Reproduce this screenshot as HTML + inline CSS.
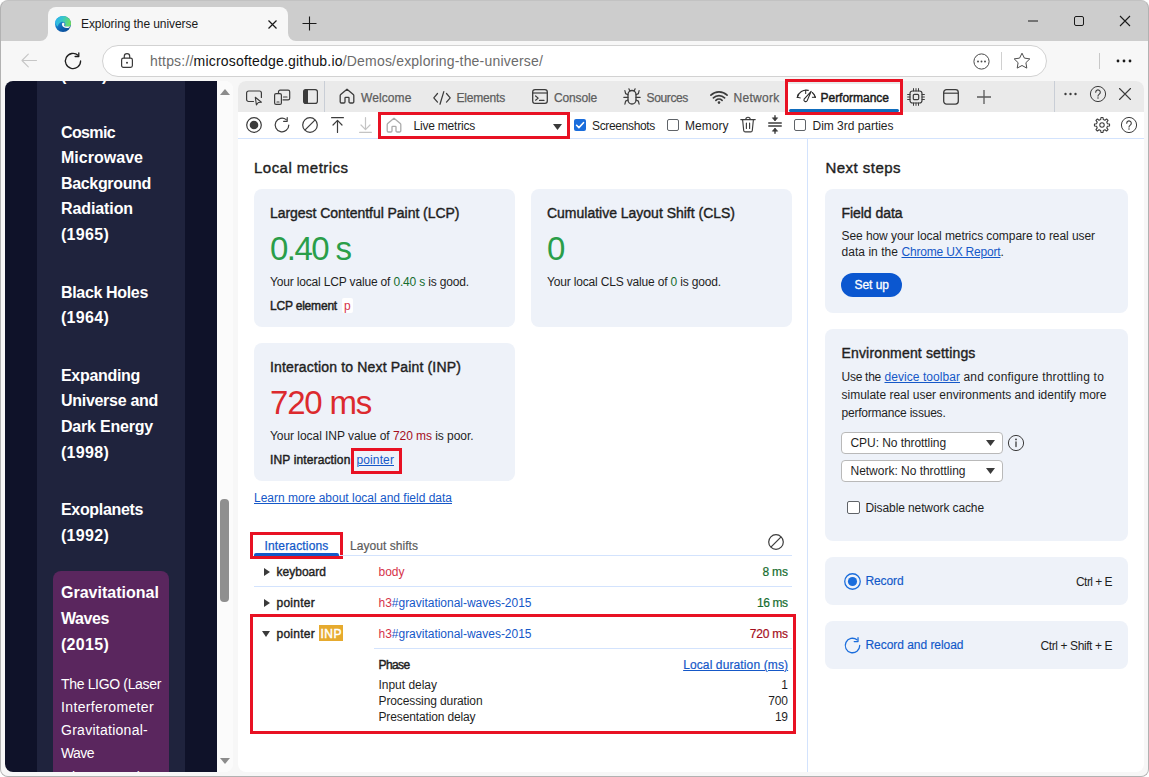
<!DOCTYPE html>
<html lang="en"><head><meta charset="utf-8"><title>Exploring the universe</title>
<style>
*{box-sizing:border-box;margin:0;padding:0}
html,body{width:1149px;height:777px;overflow:hidden;background:#fff}
body{position:relative;font-family:"Liberation Sans",sans-serif;color:#1f1f1f}
.a{position:absolute}
.t{position:absolute;white-space:nowrap;font-family:"Liberation Sans",sans-serif}
svg{position:absolute;overflow:visible}
.card{position:absolute;background:#eef2f9;border-radius:8px}
.red{position:absolute;border:3px solid #e81123}
.cb{position:absolute;width:13px;height:13px;border:1px solid #5f6368;border-radius:2px;background:#fff}
.g{color:#188038}.r{color:#c5221f}.bl{color:#0b57d0}
.u{text-decoration:underline;text-decoration-thickness:1px;text-underline-offset:1px}
</style></head><body>
<div class="a" style="left:0;top:0;width:1149px;height:777px;background:#cdcdcd;border:1px solid #b2b2b2;border-top-color:#c2c2c2;border-radius:8px"></div>
<div class="a" style="left:48px;top:7px;width:240px;height:34px;background:#f7f7f7;border-radius:8px 8px 0 0"></div>
<div class="a" style="left:1px;top:41px;width:1147px;height:40px;background:#f7f7f7"></div>
<div class="a" style="left:102px;top:45px;width:945px;height:32px;background:#fff;border:1px solid #d2d2d2;border-radius:16px"></div>
<div class="a" style="left:1px;top:81px;width:1147px;height:695px;background:#f7f7f7;border-radius:0 0 7px 7px"></div>
<div class="a" id="page" style="left:5px;top:81px;width:228px;height:691px;background:#fbfbfb;border-radius:8px;overflow:hidden"><div class="a" style="left:0;top:0;width:212px;height:691px;background:#0f1229"></div><div class="a" style="left:32px;top:0;width:148px;height:691px;background:#1f233d"></div><div class="a" style="left:48px;top:490px;width:116px;height:260px;background:#5a265e;border-radius:8px"></div><div class="a" style="left:212px;top:0;width:16px;height:691px;background:#fbfbfb"></div><div class="a" style="left:215px;top:418px;width:9px;height:103px;background:#8f8f8f;border-radius:4px"></div></div>
<div class="a" id="dt" style="left:238px;top:81px;width:906px;height:691px;background:#fff;border-radius:8px;overflow:hidden"><div class="a" style="left:0;top:0;width:906px;height:31px;background:#eaeaea"></div><div class="a" style="left:0;top:57px;width:906px;height:1px;background:#d3e3fd"></div><div class="a" style="left:569px;top:58px;width:1px;height:633px;background:#d3e3fd"></div></div>
<div class="card" style="left:254px;top:189px;width:261px;height:138px"></div>
<div class="card" style="left:531px;top:189px;width:261px;height:138px"></div>
<div class="card" style="left:254px;top:343px;width:261px;height:138px"></div>
<div class="card" style="left:825px;top:189px;width:303px;height:124px"></div>
<div class="card" style="left:825px;top:329px;width:303px;height:212px"></div>
<div class="card" style="left:825px;top:557px;width:303px;height:48px"></div>
<div class="card" style="left:825px;top:621px;width:303px;height:48px"></div>
<div class="red" style="left:785px;top:79px;width:118px;height:36px"></div>
<div class="red" style="left:378px;top:112px;width:192px;height:27px"></div>
<div class="red" style="left:351px;top:448px;width:51px;height:26px"></div>
<div class="red" style="left:250px;top:532px;width:93px;height:27px"></div>
<div class="red" style="left:250px;top:614px;width:546px;height:120px"></div>
<svg style="left:40px;top:33px" width="8" height="8"><path d="M8 0v8H0a8 8 0 0 0 8-8z" fill="#f7f7f7"/></svg>
<svg style="left:288px;top:33px" width="8" height="8"><path d="M0 0v8h8a8 8 0 0 1-8-8z" fill="#f7f7f7"/></svg>
<svg style="left:55px;top:16px" width="16" height="16" viewBox="0 0 16 16">
<defs><linearGradient id="eg1" x1="0.100" y1="0.200" x2="0.800" y2="1"><stop offset="0" stop-color="#1e9fe6"/><stop offset="0.600" stop-color="#0d5fb0"/><stop offset="1" stop-color="#0a4a94"/></linearGradient>
<linearGradient id="eg2" x1="0" y1="0.300" x2="1" y2="0.500"><stop offset="0" stop-color="#2bb4ee"/><stop offset="0.450" stop-color="#38c6c9"/><stop offset="1" stop-color="#6fe05a"/></linearGradient></defs>
<circle cx="8" cy="8" r="8" fill="url(#eg1)"/>
<path d="M0.200 6.300A8 8 0 0 1 16 7.400C16.100 9.300 15 10.700 13.300 10.700L10.600 10.700C9.800 10.700 9.500 10.100 9.900 9.500C10.500 8.600 10.400 7.600 9.700 6.800C8.900 5.900 7.600 5.600 6.400 6C4.400 6.600 3 8.300 2.900 10.500C1.400 9.700 0.300 8.200 0.200 6.300Z" fill="url(#eg2)"/>
<path d="M6.900 8.100C6.900 7.100 7.700 6.500 8.600 6.700C9.500 6.900 9.800 7.800 9.400 8.600C8.900 9.600 9.400 10.400 10.500 10.500L13.600 10.500C14.400 10.500 15 10.200 15.300 9.900C15 10.900 14.200 11.600 13.100 11.900C11.500 12.300 9.700 12 8.500 11.100C7.500 10.400 6.900 9.300 6.900 8.100Z" fill="#f7f7f7"/>
</svg>
<svg style="left:268px;top:20px" width="9" height="9" viewBox="0 0 9 9"><path d="M.5.5l8 8M8.500.5l-8 8" stroke="#1a1a1a" stroke-width="1.200" fill="none"/></svg>
<svg style="left:302px;top:16px" width="15" height="15" viewBox="0 0 15 15"><path d="M7.500 .5v14M.5 7.500h14" stroke="#1a1a1a" stroke-width="1.100" fill="none"/></svg>
<svg style="left:1028px;top:20px" width="10" height="2"><path d="M0 1h10" stroke="#1a1a1a" stroke-width="1"/></svg>
<svg style="left:1074px;top:16px" width="10" height="10"><rect x=".5" y=".5" width="9" height="9" rx="1.500" fill="none" stroke="#1a1a1a" stroke-width="1"/></svg>
<svg style="left:1120px;top:16px" width="10" height="10"><path d="M0 0l10 10M10 0L0 10" stroke="#1a1a1a" stroke-width="1.100" fill="none"/></svg>
<svg style="left:21px;top:53px" width="16" height="15" viewBox="0 0 16 15"><path d="M15.500 7.500H1M7.300 1.200L1 7.500l6.300 6.300" stroke="#c6c6c6" stroke-width="1.100" fill="none" stroke-linecap="round" stroke-linejoin="round"/></svg>
<svg style="left:64px;top:52px" width="18" height="18" viewBox="0 0 18 18"><path d="M16.600 9a7.600 7.600 0 1 1-2.500-5.650" stroke="#1f1f1f" stroke-width="1.300" fill="none" stroke-linecap="round"/><path d="M14.800 0.800v3.700h-3.700" stroke="#1f1f1f" stroke-width="1.300" fill="none" stroke-linecap="round" stroke-linejoin="round"/></svg>
<svg style="left:121px;top:53px" width="12" height="15" viewBox="0 0 12 15"><rect x=".6" y="5.200" width="10.800" height="9.200" rx="1.800" fill="none" stroke="#3a3a3a" stroke-width="1.200"/><path d="M3.300 5.200V3.300a2.700 2.700 0 0 1 5.400 0v1.900" fill="none" stroke="#3a3a3a" stroke-width="1.200"/><circle cx="6" cy="9.800" r="1" fill="#3a3a3a"/></svg>
<svg style="left:972.500px;top:52.500px" width="17" height="17" viewBox="0 0 17 17"><circle cx="8.500" cy="8.500" r="7.600" fill="none" stroke="#4a4a4a" stroke-width="1"/><circle cx="5" cy="8.500" r=".95" fill="#4a4a4a"/><circle cx="8.500" cy="8.500" r=".95" fill="#4a4a4a"/><circle cx="12" cy="8.500" r=".95" fill="#4a4a4a"/></svg>
<div class="a" style="left:1001px;top:52px;width:1px;height:18px;background:#d0d0d0"></div>
<svg style="left:1013px;top:52px" width="18" height="17" viewBox="0 0 18 17"><path d="M9 1.200l2.400 4.900 5.400.8-3.900 3.800.9 5.400L9 13.500l-4.800 2.600.9-5.400L1.200 6.900l5.400-.8z" fill="none" stroke="#4d4d4d" stroke-width="1" stroke-linejoin="round"/></svg>
<div class="a" style="left:1099px;top:53px;width:1px;height:16px;background:#c8c8c8"></div>
<svg style="left:1116px;top:59px" width="16" height="4"><circle cx="2" cy="2" r="1.400" fill="#1a1a1a"/><circle cx="8" cy="2" r="1.400" fill="#1a1a1a"/><circle cx="14" cy="2" r="1.400" fill="#1a1a1a"/></svg>
<div class="a" style="left:61px;top:81px;width:50px;height:3px;overflow:hidden"><span class="t" style="left:0;top:-14px;font-size:16px;line-height:18px;font-weight:bold;color:#fff">(1967)</span></div>
<div class="a" style="left:61px;top:765px;width:100px;height:7px;overflow:hidden"><span class="t" style="left:0;top:4px;font-size:14px;line-height:16px;color:#fff">Observatory)</span></div>
<svg style="left:220px;top:89px" width="10" height="7"><path d="M5 0l5 6H0z" fill="#8c8c8c"/></svg>
<svg style="left:220px;top:757px" width="10" height="7"><path d="M5 7l5-6H0z" fill="#8c8c8c"/></svg>
<div class="a" style="left:788px;top:84px;width:112px;height:28px;background:#fff"></div>
<div class="a" style="left:789px;top:109px;width:110px;height:3px;background:#0f6cbd;border-radius:1.5px"></div>
<svg style="left:246px;top:90px" width="17" height="16" viewBox="0 0 17 16"><path d="M7.500 11.500H2.600a2 2 0 0 1-2-2V3a2 2 0 0 1 2-2h10.800a2 2 0 0 1 2 2v4.500" fill="none" stroke="#3c3c3c" stroke-width="1.200" stroke-linecap="round"/><path d="M9.300 7.300l1.100 7.600 1.900-2.400 3.100-.2z" fill="none" stroke="#3c3c3c" stroke-width="1.100" stroke-linejoin="round"/></svg>
<svg style="left:274px;top:89px" width="17" height="16" viewBox="0 0 17 16"><path d="M4.500 4V2.700a1.600 1.600 0 0 1 1.600-1.600h8a1.600 1.600 0 0 1 1.600 1.600v6.600a1.600 1.600 0 0 1-1.600 1.600H8.600" fill="none" stroke="#3c3c3c" stroke-width="1.200"/><rect x=".6" y="4.600" width="6.800" height="10.800" rx="1.500" fill="none" stroke="#3c3c3c" stroke-width="1.200"/><path d="M3 13h2M9.500 8h3.500" stroke="#3c3c3c" stroke-width="1.200" stroke-linecap="round"/></svg>
<svg style="left:303px;top:89px" width="15" height="15" viewBox="0 0 15 15"><rect x=".6" y=".6" width="13.800" height="13.800" rx="2.200" fill="none" stroke="#3c3c3c" stroke-width="1.200"/><path d="M.6 2.800a2.200 2.200 0 0 1 2.200-2.200H5v13.800H2.800a2.200 2.200 0 0 1-2.200-2.200z" fill="#3c3c3c"/></svg>
<div class="a" style="left:324px;top:81px;width:1px;height:31px;background:#c9ced6"></div>
<svg style="left:339px;top:88px" width="16" height="16" viewBox="0 0 16 16"><path d="M8 1.200L1.700 6.600a1.500 1.500 0 0 0-.5 1.100v6.100a1.200 1.200 0 0 0 1.200 1.200h2.400a1.200 1.200 0 0 0 1.200-1.200V10a.6.6 0 0 1 .6-.6h2.800a.6.6 0 0 1 .6.600v3.800a1.200 1.200 0 0 0 1.200 1.200h2.400a1.200 1.200 0 0 0 1.200-1.200V7.700a1.500 1.500 0 0 0-.5-1.100z" fill="none" stroke="#3c3c3c" stroke-width="1.3" stroke-linejoin="round"/></svg>
<svg style="left:433px;top:91px" width="18" height="14" viewBox="0 0 18 14"><path d="M4.500 2.500L.8 6.800l3.700 4.300M13.500 2.500l3.700 4.300-3.700 4.300M10.800.6L7 13.200" fill="none" stroke="#3c3c3c" stroke-width="1.250" stroke-linecap="round" stroke-linejoin="round"/></svg>
<svg style="left:532px;top:89px" width="16" height="15" viewBox="0 0 16 15"><rect x=".7" y=".7" width="14.600" height="13.600" rx="2.400" fill="none" stroke="#3c3c3c" stroke-width="1.300"/><path d="M.7 4h14.600" stroke="#3c3c3c" stroke-width="1.200"/><path d="M3.600 7l2.600 2.100-2.600 2.100M7.500 11.400h4.500" fill="none" stroke="#3c3c3c" stroke-width="1.200" stroke-linecap="round" stroke-linejoin="round"/></svg>
<svg style="left:623px;top:88px" width="18" height="17" viewBox="0 0 18 17"><path d="M5 6.500a4 4 0 0 1 8 0v5.500a4 4 0 0 1-8 0z" fill="none" stroke="#3c3c3c" stroke-width="1.300"/><path d="M6.800 3L5.900 .8M11.200 3L12.100 .8M5 9.300H.8M13 9.300H17.200M5 6.700L2.600 5.600 1.900 2.600M13 6.700l2.400-1.100.7-3M5 12l-2.400 1.100-.7 3M13 12l2.400 1.100.7 3" fill="none" stroke="#3c3c3c" stroke-width="1.200" stroke-linecap="round" stroke-linejoin="round"/></svg>
<svg style="left:710px;top:90px" width="18" height="14" viewBox="0 0 18 14"><path d="M.9 5.200a11.600 11.600 0 0 1 16.200 0M3.400 7.900a8 8 0 0 1 11.200 0M5.900 10.400a4.500 4.500 0 0 1 6.200 0" fill="none" stroke="#3c3c3c" stroke-width="1.700" stroke-linecap="round"/><circle cx="9" cy="12.600" r="1.300" fill="#3c3c3c"/></svg>
<svg style="left:796px;top:89px" width="21" height="14" viewBox="0 0 21 14"><path d="M1.300 8.300A9.200 9.200 0 0 1 12.300 1.400M16.300 3.500A9.200 9.200 0 0 1 19.300 8.300" fill="none" stroke="#2b2b2b" stroke-width="1.150" stroke-linecap="round"/><path d="M1.300 8.300L4.300 8.900M1.300 8.300L2 5.800M19.300 8.300L16.300 8.300M19.300 8.300L18.400 5.800M9.700 1.200V4.600" fill="none" stroke="#2b2b2b" stroke-width="1" stroke-linecap="round"/><path d="M15.200 2.300L11.200 11.600a1.700 1.700 0 0 1-3.100-1.400z" fill="none" stroke="#2b2b2b" stroke-width="1.100" stroke-linejoin="round"/></svg>
<svg style="left:907px;top:88px" width="18" height="18" viewBox="0 0 18 18"><rect x="3" y="3" width="12" height="12" rx="2.500" fill="none" stroke="#3c3c3c" stroke-width="1.200"/><rect x="6.300" y="6.300" width="5.400" height="5.400" rx="1.200" fill="none" stroke="#3c3c3c" stroke-width="1.200"/><path d="M6.500 3V.6M9 3V.6M11.500 3V.6M6.500 17.400V15M9 17.400V15M11.500 17.400V15M3 6.500H.6M3 9H.6M3 11.500H.6M17.400 6.500H15M17.400 9H15M17.400 11.500H15" stroke="#3c3c3c" stroke-width="1" stroke-linecap="round"/></svg>
<svg style="left:943px;top:89px" width="16" height="16" viewBox="0 0 16 16"><rect x=".7" y=".7" width="14.600" height="14.400" rx="2.800" fill="none" stroke="#3c3c3c" stroke-width="1.300"/><path d="M.7 4.200h14.600" stroke="#3c3c3c" stroke-width="1.200"/></svg>
<svg style="left:977px;top:90px" width="14" height="14" viewBox="0 0 14 14"><path d="M7 0v14M0 7h14" stroke="#5a5a5a" stroke-width="1.300"/></svg>
<div class="a" style="left:1054px;top:81px;width:1px;height:31px;background:#c9ced6"></div>
<svg style="left:1064px;top:92px" width="13" height="4"><circle cx="1.500" cy="2" r="1.200" fill="#3c3c3c"/><circle cx="6.500" cy="2" r="1.200" fill="#3c3c3c"/><circle cx="11.500" cy="2" r="1.200" fill="#3c3c3c"/></svg>
<svg style="left:1089px;top:85px" width="18" height="18" viewBox="-9 -9 18 18"><circle cx="0" cy="0" r="7.6" fill="none" stroke="#3c3c3c" stroke-width="1"/><path d="M-2.300 -1.800a2.300 2.300 0 1 1 3.600 1.900c-.8.600-1.300 1-1.300 2" fill="none" stroke="#3c3c3c" stroke-width="1.100" stroke-linecap="round"/><circle cx="0" cy="4" r=".75" fill="#3c3c3c"/></svg>
<svg style="left:1119px;top:88px" width="12" height="12" viewBox="0 0 12 12"><path d="M.5.500l11 11M11.500.5l-11 11" stroke="#3c3c3c" stroke-width="1.100" stroke-linecap="round"/></svg>
<svg style="left:246px;top:117px" width="16" height="16" viewBox="0 0 16 16"><circle cx="8" cy="8" r="7.300" fill="none" stroke="#3c3c3c" stroke-width="1.200"/><circle cx="8" cy="8" r="4.300" fill="#3c3c3c"/></svg>
<svg style="left:274px;top:117px" width="16" height="16" viewBox="0 0 16 16"><path d="M14.800 8a6.800 6.800 0 1 1-2.600-5.350" fill="none" stroke="#3c3c3c" stroke-width="1.200" stroke-linecap="round"/><path d="M13.200 .7v3.600h-3.600" fill="none" stroke="#3c3c3c" stroke-width="1.200" stroke-linecap="round" stroke-linejoin="round"/></svg>
<svg style="left:302px;top:117px" width="16" height="16" viewBox="0 0 16 16"><circle cx="8" cy="8" r="7.300" fill="none" stroke="#3c3c3c" stroke-width="1.200"/><path d="M2.900 13.100L13.100 2.900" stroke="#3c3c3c" stroke-width="1.200"/></svg>
<svg style="left:331px;top:117px" width="13" height="16" viewBox="0 0 13 16"><path d="M.6.700h11.800M6.500 15.400V3.600M2 8l4.500-4.600L11 8" fill="none" stroke="#3c3c3c" stroke-width="1.200" stroke-linecap="round" stroke-linejoin="round"/></svg>
<svg style="left:359px;top:117px" width="13" height="16" viewBox="0 0 13 16"><path d="M.6 15.300h11.800M6.500.6v11.800M2 8l4.500 4.600L11 8" fill="none" stroke="#c4c4c4" stroke-width="1.200" stroke-linecap="round" stroke-linejoin="round"/></svg>
<svg style="left:386px;top:117px" width="16" height="16" viewBox="0 0 16 16"><path d="M8 1.200L1.700 6.600a1.500 1.500 0 0 0-.5 1.100v6.100a1.200 1.200 0 0 0 1.200 1.200h2.400a1.200 1.200 0 0 0 1.200-1.200V10a.6.6 0 0 1 .6-.6h2.800a.6.6 0 0 1 .6.600v3.800a1.200 1.200 0 0 0 1.200 1.200h2.400a1.200 1.200 0 0 0 1.200-1.200V7.700a1.500 1.500 0 0 0-.5-1.100z" fill="none" stroke="#ababab" stroke-width="1.3" stroke-linejoin="round"/></svg>
<svg style="left:553px;top:124px" width="9" height="6"><path d="M0 0h9L4.500 6z" fill="#3a3a3a"/></svg>
<svg style="left:574px;top:119px" width="12" height="12" viewBox="0 0 12 12"><rect width="12" height="12" rx="2" fill="#1a6ddc"/><path d="M2.600 6.300l2.300 2.300L9.500 3.700" fill="none" stroke="#fff" stroke-width="1.600" stroke-linecap="round" stroke-linejoin="round"/></svg>
<div class="cb" style="left:667px;top:119px;width:12px;height:12px"></div>
<svg style="left:740px;top:116px" width="16" height="17" viewBox="0 0 16 17"><path d="M.8 3.600h14.400M5.800 3.400a2.200 2.200 0 0 1 4.400 0M2.600 3.800l1.100 10.700a1.600 1.600 0 0 0 1.600 1.400h5.400a1.600 1.600 0 0 0 1.600-1.400L13.400 3.800M6.400 7v5.500M9.600 7v5.500" fill="none" stroke="#3c3c3c" stroke-width="1.150" stroke-linecap="round"/></svg>
<svg style="left:768px;top:115px" width="14" height="19" viewBox="0 0 14 19"><path d="M.7 8h12.600M.7 11h12.600" stroke="#3c3c3c" stroke-width="1.300" stroke-linecap="round"/><path d="M7 .7v4.300M7 18.300v-4.300" stroke="#3c3c3c" stroke-width="1.400" stroke-linecap="round"/><path d="M4.300 2.800L7 6l2.700-3.200zM4.300 16.200L7 13l2.700 3.200z" fill="#3c3c3c" stroke="#3c3c3c" stroke-width=".6" stroke-linejoin="round"/></svg>
<div class="cb" style="left:794px;top:119px;width:12px;height:12px"></div>
<svg style="left:1093px;top:116px" width="18" height="18" viewBox="-9 -9 18 18"><path d="M5.45 -1.31 L7.53 -1.01 L7.53 1.01 L5.45 1.31 L4.77 2.93 L6.04 4.61 L4.61 6.04 L2.93 4.77 L1.31 5.45 L1.01 7.53 L-1.01 7.53 L-1.31 5.45 L-2.93 4.77 L-4.61 6.04 L-6.04 4.61 L-4.77 2.93 L-5.45 1.31 L-7.53 1.01 L-7.53 -1.01 L-5.45 -1.31 L-4.77 -2.93 L-6.04 -4.61 L-4.61 -6.04 L-2.93 -4.77 L-1.31 -5.45 L-1.01 -7.53 L1.01 -7.53 L1.31 -5.45 L2.93 -4.77 L4.61 -6.04 L6.04 -4.61 L4.77 -2.93Z" fill="none" stroke="#3c3c3c" stroke-width="1.100" stroke-linejoin="round"/><circle cx="0" cy="0" r="2.200" fill="none" stroke="#3c3c3c" stroke-width="1.100"/></svg>
<svg style="left:1120px;top:116px" width="18" height="18" viewBox="-9 -9 18 18"><circle cx="0" cy="0" r="7.6" fill="none" stroke="#3c3c3c" stroke-width="1"/><path d="M-2.300 -1.800a2.300 2.300 0 1 1 3.600 1.900c-.8.600-1.300 1-1.300 2" fill="none" stroke="#3c3c3c" stroke-width="1.100" stroke-linecap="round"/><circle cx="0" cy="4" r=".75" fill="#3c3c3c"/></svg>
<div class="a" style="left:342px;top:298px;width:11px;height:15px;background:#fff;border-radius:2px"></div>
<div class="a" style="left:254px;top:555px;width:538px;height:1px;background:#d3e3fd"></div>
<div class="a" style="left:254px;top:552.500px;width:85px;height:3.500px;background:#1259c9;border-radius:2px 2px 0 0"></div>
<svg style="left:768px;top:534px" width="16" height="16" viewBox="0 0 16 16"><circle cx="8" cy="8" r="7.300" fill="none" stroke="#3c3c3c" stroke-width="1.200"/><path d="M2.900 13.100L13.100 2.900" stroke="#3c3c3c" stroke-width="1.200"/></svg>
<svg style="left:264px;top:568px" width="6" height="8"><path d="M0 0l6 4-6 4z" fill="#3a3a3a"/></svg>
<div class="a" style="left:254px;top:586px;width:538px;height:1px;background:#d3e3fd"></div>
<svg style="left:264px;top:599px" width="6" height="8"><path d="M0 0l6 4-6 4z" fill="#3a3a3a"/></svg>
<svg style="left:262px;top:631px" width="8" height="6"><path d="M0 0h8L4 6z" fill="#3a3a3a"/></svg>
<div class="a" style="left:319px;top:625px;width:24px;height:16px;background:#e6aa2e"></div>
<div class="a" style="left:374px;top:648px;width:418px;height:1px;background:#d3e3fd"></div>
<div class="a" style="left:841px;top:273px;width:61px;height:24px;background:#0b57d0;border-radius:12px"></div>
<div class="a" style="left:841px;top:432px;width:162px;height:22px;background:#fff;border:1px solid #b9b9b9;border-radius:4px"></div>
<svg style="left:986px;top:440px" width="9" height="6"><path d="M0 0h9L4.500 6z" fill="#3a3a3a"/></svg>
<div class="a" style="left:841px;top:460px;width:162px;height:22px;background:#fff;border:1px solid #b9b9b9;border-radius:4px"></div>
<svg style="left:986px;top:468px" width="9" height="6"><path d="M0 0h9L4.500 6z" fill="#3a3a3a"/></svg>
<svg style="left:1007px;top:434px" width="18" height="18" viewBox="-9 -9 18 18"><circle cx="0" cy="0" r="7.600" fill="none" stroke="#3c3c3c" stroke-width="1"/><path d="M0 -1v4.600" stroke="#3c3c3c" stroke-width="1.300" stroke-linecap="round"/><circle cx="0" cy="-3.600" r=".9" fill="#3c3c3c"/></svg>
<div class="cb" style="left:847px;top:501px"></div>
<svg style="left:844px;top:573px" width="17" height="17" viewBox="0 0 16 16"><circle cx="8" cy="8" r="7.300" fill="none" stroke="#1a6ddc" stroke-width="1.200"/><circle cx="8" cy="8" r="4.300" fill="#1a6ddc"/></svg>
<svg style="left:844px;top:637px" width="17" height="17" viewBox="0 0 16 16"><path d="M14.800 8a6.800 6.800 0 1 1-2.600-5.350" fill="none" stroke="#1a6ddc" stroke-width="1.200" stroke-linecap="round"/><path d="M13.200 .7v3.600h-3.600" fill="none" stroke="#1a6ddc" stroke-width="1.200" stroke-linecap="round" stroke-linejoin="round"/></svg>
<span class="t" style="top:17px;font-size:12px;line-height:14px;left:81px;letter-spacing:-0.079px;color:#1a1a1a">Exploring the universe</span>
<span class="t" style="top:53px;font-size:14px;line-height:16px;left:150px;letter-spacing:0.191px;"><span style="color:#6b6b6b">https://</span><span style="color:#111">microsoftedge.github.io</span><span style="color:#6b6b6b">/Demos/exploring-the-universe/</span></span>
<span class="t" style="top:124px;font-size:16px;line-height:17px;left:61px;letter-spacing:-0.633px;font-weight:bold;color:#fff">Cosmic</span>
<span class="t" style="top:149px;font-size:16px;line-height:17px;left:61px;letter-spacing:0.021px;font-weight:bold;color:#fff">Microwave</span>
<span class="t" style="top:175px;font-size:16px;line-height:17px;left:61px;letter-spacing:-0.334px;font-weight:bold;color:#fff">Background</span>
<span class="t" style="top:200px;font-size:16px;line-height:17px;left:61px;letter-spacing:-0.099px;font-weight:bold;color:#fff">Radiation</span>
<span class="t" style="top:226px;font-size:16px;line-height:17px;left:61px;letter-spacing:0.292px;font-weight:bold;color:#fff">(1965)</span>
<span class="t" style="top:284px;font-size:16px;line-height:17px;left:61px;letter-spacing:-0.338px;font-weight:bold;color:#fff">Black Holes</span>
<span class="t" style="top:309px;font-size:16px;line-height:17px;left:61px;letter-spacing:0.292px;font-weight:bold;color:#fff">(1964)</span>
<span class="t" style="top:367px;font-size:16px;line-height:17px;left:61px;letter-spacing:-0.309px;font-weight:bold;color:#fff">Expanding</span>
<span class="t" style="top:392px;font-size:16px;line-height:17px;left:61px;letter-spacing:-0.290px;font-weight:bold;color:#fff">Universe and</span>
<span class="t" style="top:418px;font-size:16px;line-height:17px;left:61px;letter-spacing:-0.206px;font-weight:bold;color:#fff">Dark Energy</span>
<span class="t" style="top:444px;font-size:16px;line-height:17px;left:61px;letter-spacing:0.292px;font-weight:bold;color:#fff">(1998)</span>
<span class="t" style="top:501px;font-size:16px;line-height:17px;left:61px;letter-spacing:-0.336px;font-weight:bold;color:#fff">Exoplanets</span>
<span class="t" style="top:527px;font-size:16px;line-height:17px;left:61px;letter-spacing:0.292px;font-weight:bold;color:#fff">(1992)</span>
<span class="t" style="top:584px;font-size:16px;line-height:17px;left:61px;letter-spacing:0.014px;font-weight:bold;color:#fff">Gravitational</span>
<span class="t" style="top:610px;font-size:16px;line-height:17px;left:61px;letter-spacing:-0.422px;font-weight:bold;color:#fff">Waves</span>
<span class="t" style="top:636px;font-size:16px;line-height:17px;left:61px;letter-spacing:0.292px;font-weight:bold;color:#fff">(2015)</span>
<span class="t" style="top:676px;font-size:14px;line-height:16px;left:61px;letter-spacing:-0.336px;color:#fff">The LIGO (Laser</span>
<span class="t" style="top:699px;font-size:14px;line-height:16px;left:61px;letter-spacing:0.362px;color:#fff">Interferometer</span>
<span class="t" style="top:722px;font-size:14px;line-height:16px;left:61px;letter-spacing:0.267px;color:#fff">Gravitational-</span>
<span class="t" style="top:745px;font-size:14px;line-height:16px;left:61px;letter-spacing:-0.570px;color:#fff">Wave</span>
<span class="t" style="top:91px;font-size:12px;line-height:14px;left:361px;letter-spacing:0.100px;color:#5e5e5e;font-weight:normal;-webkit-text-stroke:.25px #5e5e5e">Welcome</span>
<span class="t" style="top:91px;font-size:12px;line-height:14px;left:456.5px;letter-spacing:-0.191px;color:#5e5e5e;font-weight:normal;-webkit-text-stroke:.25px #5e5e5e">Elements</span>
<span class="t" style="top:91px;font-size:12px;line-height:14px;left:554px;letter-spacing:-0.147px;color:#5e5e5e;font-weight:normal;-webkit-text-stroke:.25px #5e5e5e">Console</span>
<span class="t" style="top:91px;font-size:12px;line-height:14px;left:646.5px;letter-spacing:-0.362px;color:#5e5e5e;font-weight:normal;-webkit-text-stroke:.25px #5e5e5e">Sources</span>
<span class="t" style="top:91px;font-size:12px;line-height:14px;left:733.5px;letter-spacing:0.283px;color:#5e5e5e;font-weight:normal;-webkit-text-stroke:.25px #5e5e5e">Network</span>
<span class="t" style="top:91px;font-size:12px;line-height:14px;left:820.5px;letter-spacing:-0.018px;color:#1b1b1b;-webkit-text-stroke:.45px #1b1b1b">Performance</span>
<span class="t" style="top:119px;font-size:12px;line-height:14px;left:413.5px;letter-spacing:-0.210px;color:#1f1f1f">Live metrics</span>
<span class="t" style="top:119px;font-size:12px;line-height:14px;left:592px;letter-spacing:-0.337px;color:#1f1f1f">Screenshots</span>
<span class="t" style="top:119px;font-size:12px;line-height:14px;left:685px;letter-spacing:0.026px;color:#1f1f1f">Memory</span>
<span class="t" style="top:119px;font-size:12px;line-height:14px;left:812.5px;letter-spacing:-0.024px;color:#1f1f1f">Dim 3rd parties</span>
<span class="t" style="top:159px;font-size:15px;line-height:17px;left:254px;letter-spacing:0.472px;color:#1f1f1f;-webkit-text-stroke:0.4px #1f1f1f">Local metrics</span>
<span class="t" style="top:205px;font-size:14px;line-height:16px;left:270px;letter-spacing:-0.039px;color:#1f1f1f;-webkit-text-stroke:0.4px #1f1f1f">Largest Contentful Paint (LCP)</span>
<span class="t" style="top:230px;font-size:33px;line-height:37px;left:270px;letter-spacing:-1.568px;color:#2a9e49">0.40 s</span>
<span class="t" style="top:275px;font-size:12px;line-height:14px;left:270px;letter-spacing:-0.167px;color:#1f1f1f">Your local LCP value of <span style="color:#146c2e">0.40 s</span> is good.</span>
<span class="t" style="top:299px;font-size:12px;line-height:14px;left:270px;letter-spacing:-0.196px;color:#1f1f1f;-webkit-text-stroke:0.45px #1f1f1f">LCP element</span>
<span class="t" style="top:299px;font-size:12px;line-height:14px;left:344px;color:#d6334a;font-size:12px">p</span>
<span class="t" style="top:205px;font-size:14px;line-height:16px;left:547px;letter-spacing:-0.011px;color:#1f1f1f;-webkit-text-stroke:0.4px #1f1f1f">Cumulative Layout Shift (CLS)</span>
<span class="t" style="top:230px;font-size:33px;line-height:37px;left:547px;letter-spacing:-0.859px;color:#2a9e49">0</span>
<span class="t" style="top:275px;font-size:12px;line-height:14px;left:547px;letter-spacing:-0.168px;color:#1f1f1f">Your local CLS value of <span style="color:#146c2e">0</span> is good.</span>
<span class="t" style="top:359px;font-size:14px;line-height:16px;left:270px;letter-spacing:0.162px;color:#1f1f1f;-webkit-text-stroke:0.4px #1f1f1f">Interaction to Next Paint (INP)</span>
<span class="t" style="top:384px;font-size:33px;line-height:37px;left:270px;letter-spacing:-1.203px;color:#dc2a2e">720 ms</span>
<span class="t" style="top:429px;font-size:12px;line-height:14px;left:270px;letter-spacing:-0.050px;color:#1f1f1f">Your local INP value of <span style="color:#a50e1c">720 ms</span> is poor.</span>
<span class="t" style="top:453px;font-size:12px;line-height:14px;left:270px;letter-spacing:0.133px;color:#1f1f1f;-webkit-text-stroke:0.45px #1f1f1f">INP interaction</span>
<span class="t u" style="top:453px;font-size:12px;line-height:14px;left:356.5px;letter-spacing:0.114px;color:#1558c8">pointer</span>
<span class="t u" style="top:491px;font-size:12px;line-height:14px;left:254px;letter-spacing:-0.004px;color:#1558c8">Learn more about local and field data</span>
<span class="t" style="top:539px;font-size:12px;line-height:14px;left:264.5px;letter-spacing:0.163px;color:#1259c9;-webkit-text-stroke:0.25px #1259c9">Interactions</span>
<span class="t" style="top:539px;font-size:12px;line-height:14px;left:350px;letter-spacing:0.048px;color:#5c5c5c;-webkit-text-stroke:0.2px #5c5c5c">Layout shifts</span>
<span class="t" style="top:565px;font-size:12px;line-height:14px;left:276.5px;letter-spacing:0.016px;color:#1f1f1f;-webkit-text-stroke:0.4px #1f1f1f">keyboard</span>
<span class="t" style="top:565px;font-size:12px;line-height:14px;left:378.5px;letter-spacing:-0.008px;color:#d6334a">body</span>
<span class="t" style="top:565px;font-size:12px;line-height:14px;right:361.13px;letter-spacing:-0.129px;color:#146c2e;-webkit-text-stroke:.2px #146c2e">8 ms</span>
<span class="t" style="top:596px;font-size:12px;line-height:14px;left:276.5px;letter-spacing:0.257px;color:#1f1f1f;-webkit-text-stroke:0.4px #1f1f1f">pointer</span>
<span class="t" style="top:596px;font-size:12px;line-height:14px;left:378.5px;letter-spacing:-0.017px;"><span style="color:#d6334a">h3</span><span style="color:#1558c8">#gravitational-waves-2015</span></span>
<span class="t" style="top:596px;font-size:12px;line-height:14px;right:361.44px;letter-spacing:-0.438px;color:#146c2e;-webkit-text-stroke:.2px #146c2e">16 ms</span>
<span class="t" style="top:627px;font-size:12px;line-height:14px;left:276.5px;letter-spacing:0.257px;color:#1f1f1f;-webkit-text-stroke:0.4px #1f1f1f">pointer</span>
<span class="t" style="top:627px;font-size:12px;line-height:14px;left:320.5px;letter-spacing:0.495px;color:#fff;-webkit-text-stroke:.45px #fff">INP</span>
<span class="t" style="top:627px;font-size:12px;line-height:14px;left:378.5px;letter-spacing:-0.017px;"><span style="color:#d6334a">h3</span><span style="color:#1558c8">#gravitational-waves-2015</span></span>
<span class="t" style="top:627px;font-size:12px;line-height:14px;right:361.23px;letter-spacing:-0.227px;color:#a50e1c;-webkit-text-stroke:.2px #a50e1c">720 ms</span>
<span class="t" style="top:658px;font-size:12px;line-height:14px;left:378.5px;letter-spacing:-0.606px;color:#1f1f1f;-webkit-text-stroke:0.45px #1f1f1f">Phase</span>
<span class="t u" style="top:658px;font-size:12px;line-height:14px;right:360.88px;letter-spacing:0.120px;color:#1558c8;-webkit-text-stroke:0.2px #1558c8">Local duration (ms)</span>
<span class="t" style="top:678px;font-size:12px;line-height:14px;left:378.5px;letter-spacing:-0.020px;color:#1f1f1f">Input delay</span>
<span class="t" style="top:694px;font-size:12px;line-height:14px;left:378.5px;letter-spacing:-0.109px;color:#1f1f1f">Processing duration</span>
<span class="t" style="top:710px;font-size:12px;line-height:14px;left:378.5px;letter-spacing:-0.134px;color:#1f1f1f">Presentation delay</span>
<span class="t" style="top:678px;font-size:12px;line-height:14px;right:361.00px;color:#1f1f1f">1</span>
<span class="t" style="top:694px;font-size:12px;line-height:14px;right:361.18px;letter-spacing:-0.177px;color:#1f1f1f">700</span>
<span class="t" style="top:710px;font-size:12px;line-height:14px;right:361.43px;letter-spacing:-0.430px;color:#1f1f1f">19</span>
<span class="t" style="top:159px;font-size:15px;line-height:17px;left:825.5px;letter-spacing:0.463px;color:#1f1f1f;-webkit-text-stroke:0.4px #1f1f1f">Next steps</span>
<span class="t" style="top:205px;font-size:14px;line-height:16px;left:841.5px;letter-spacing:-0.048px;color:#1f1f1f;-webkit-text-stroke:0.4px #1f1f1f">Field data</span>
<span class="t" style="top:229px;font-size:12px;line-height:14px;left:841.5px;letter-spacing:-0.070px;color:#1f1f1f">See how your local metrics compare to real user</span>
<span class="t" style="top:245px;font-size:12px;line-height:14px;left:841.5px;letter-spacing:0.041px;color:#1f1f1f">data in the</span>
<span class="t u" style="top:245px;font-size:12px;line-height:14px;left:901.5px;letter-spacing:-0.190px;color:#1558c8">Chrome UX Report</span>
<span class="t" style="top:245px;font-size:12px;line-height:14px;left:1000.5px;color:#1f1f1f">.</span>
<span class="t" style="top:278px;font-size:12px;line-height:14px;left:854.5px;letter-spacing:-0.034px;color:#fff;-webkit-text-stroke:.3px #fff">Set up</span>
<span class="t" style="top:345px;font-size:14px;line-height:16px;left:841.5px;letter-spacing:0.163px;color:#1f1f1f;-webkit-text-stroke:0.4px #1f1f1f">Environment settings</span>
<span class="t" style="top:370px;font-size:12px;line-height:14px;left:841.5px;letter-spacing:-0.266px;color:#1f1f1f">Use the</span>
<span class="t u" style="top:370px;font-size:12px;line-height:14px;left:884.5px;letter-spacing:0.056px;color:#1558c8">device toolbar</span>
<span class="t" style="top:370px;font-size:12px;line-height:14px;left:963.5px;letter-spacing:0.188px;color:#1f1f1f">and configure throttling to</span>
<span class="t" style="top:388px;font-size:12px;line-height:14px;left:841.5px;letter-spacing:-0.010px;color:#1f1f1f">simulate real user environments and identify more</span>
<span class="t" style="top:406px;font-size:12px;line-height:14px;left:841.5px;letter-spacing:-0.213px;color:#1f1f1f">performance issues.</span>
<span class="t" style="top:436px;font-size:12px;line-height:14px;left:850.5px;letter-spacing:-0.067px;color:#1f1f1f">CPU: No throttling</span>
<span class="t" style="top:464px;font-size:12px;line-height:14px;left:850.5px;letter-spacing:-0.018px;color:#1f1f1f">Network: No throttling</span>
<span class="t" style="top:501px;font-size:12px;line-height:14px;left:865.5px;letter-spacing:-0.106px;color:#1f1f1f">Disable network cache</span>
<span class="t" style="top:574px;font-size:12px;line-height:14px;left:865.5px;letter-spacing:-0.115px;color:#1259c9;-webkit-text-stroke:.15px #1259c9">Record</span>
<span class="t" style="top:575px;font-size:12px;line-height:14px;right:37.04px;letter-spacing:-0.543px;color:#1f1f1f">Ctrl + E</span>
<span class="t" style="top:638px;font-size:12px;line-height:14px;left:865.5px;letter-spacing:-0.043px;color:#1259c9;-webkit-text-stroke:.15px #1259c9">Record and reload</span>
<span class="t" style="top:639px;font-size:12px;line-height:14px;right:36.91px;letter-spacing:-0.408px;color:#1f1f1f">Ctrl + Shift + E</span>
</body></html>
